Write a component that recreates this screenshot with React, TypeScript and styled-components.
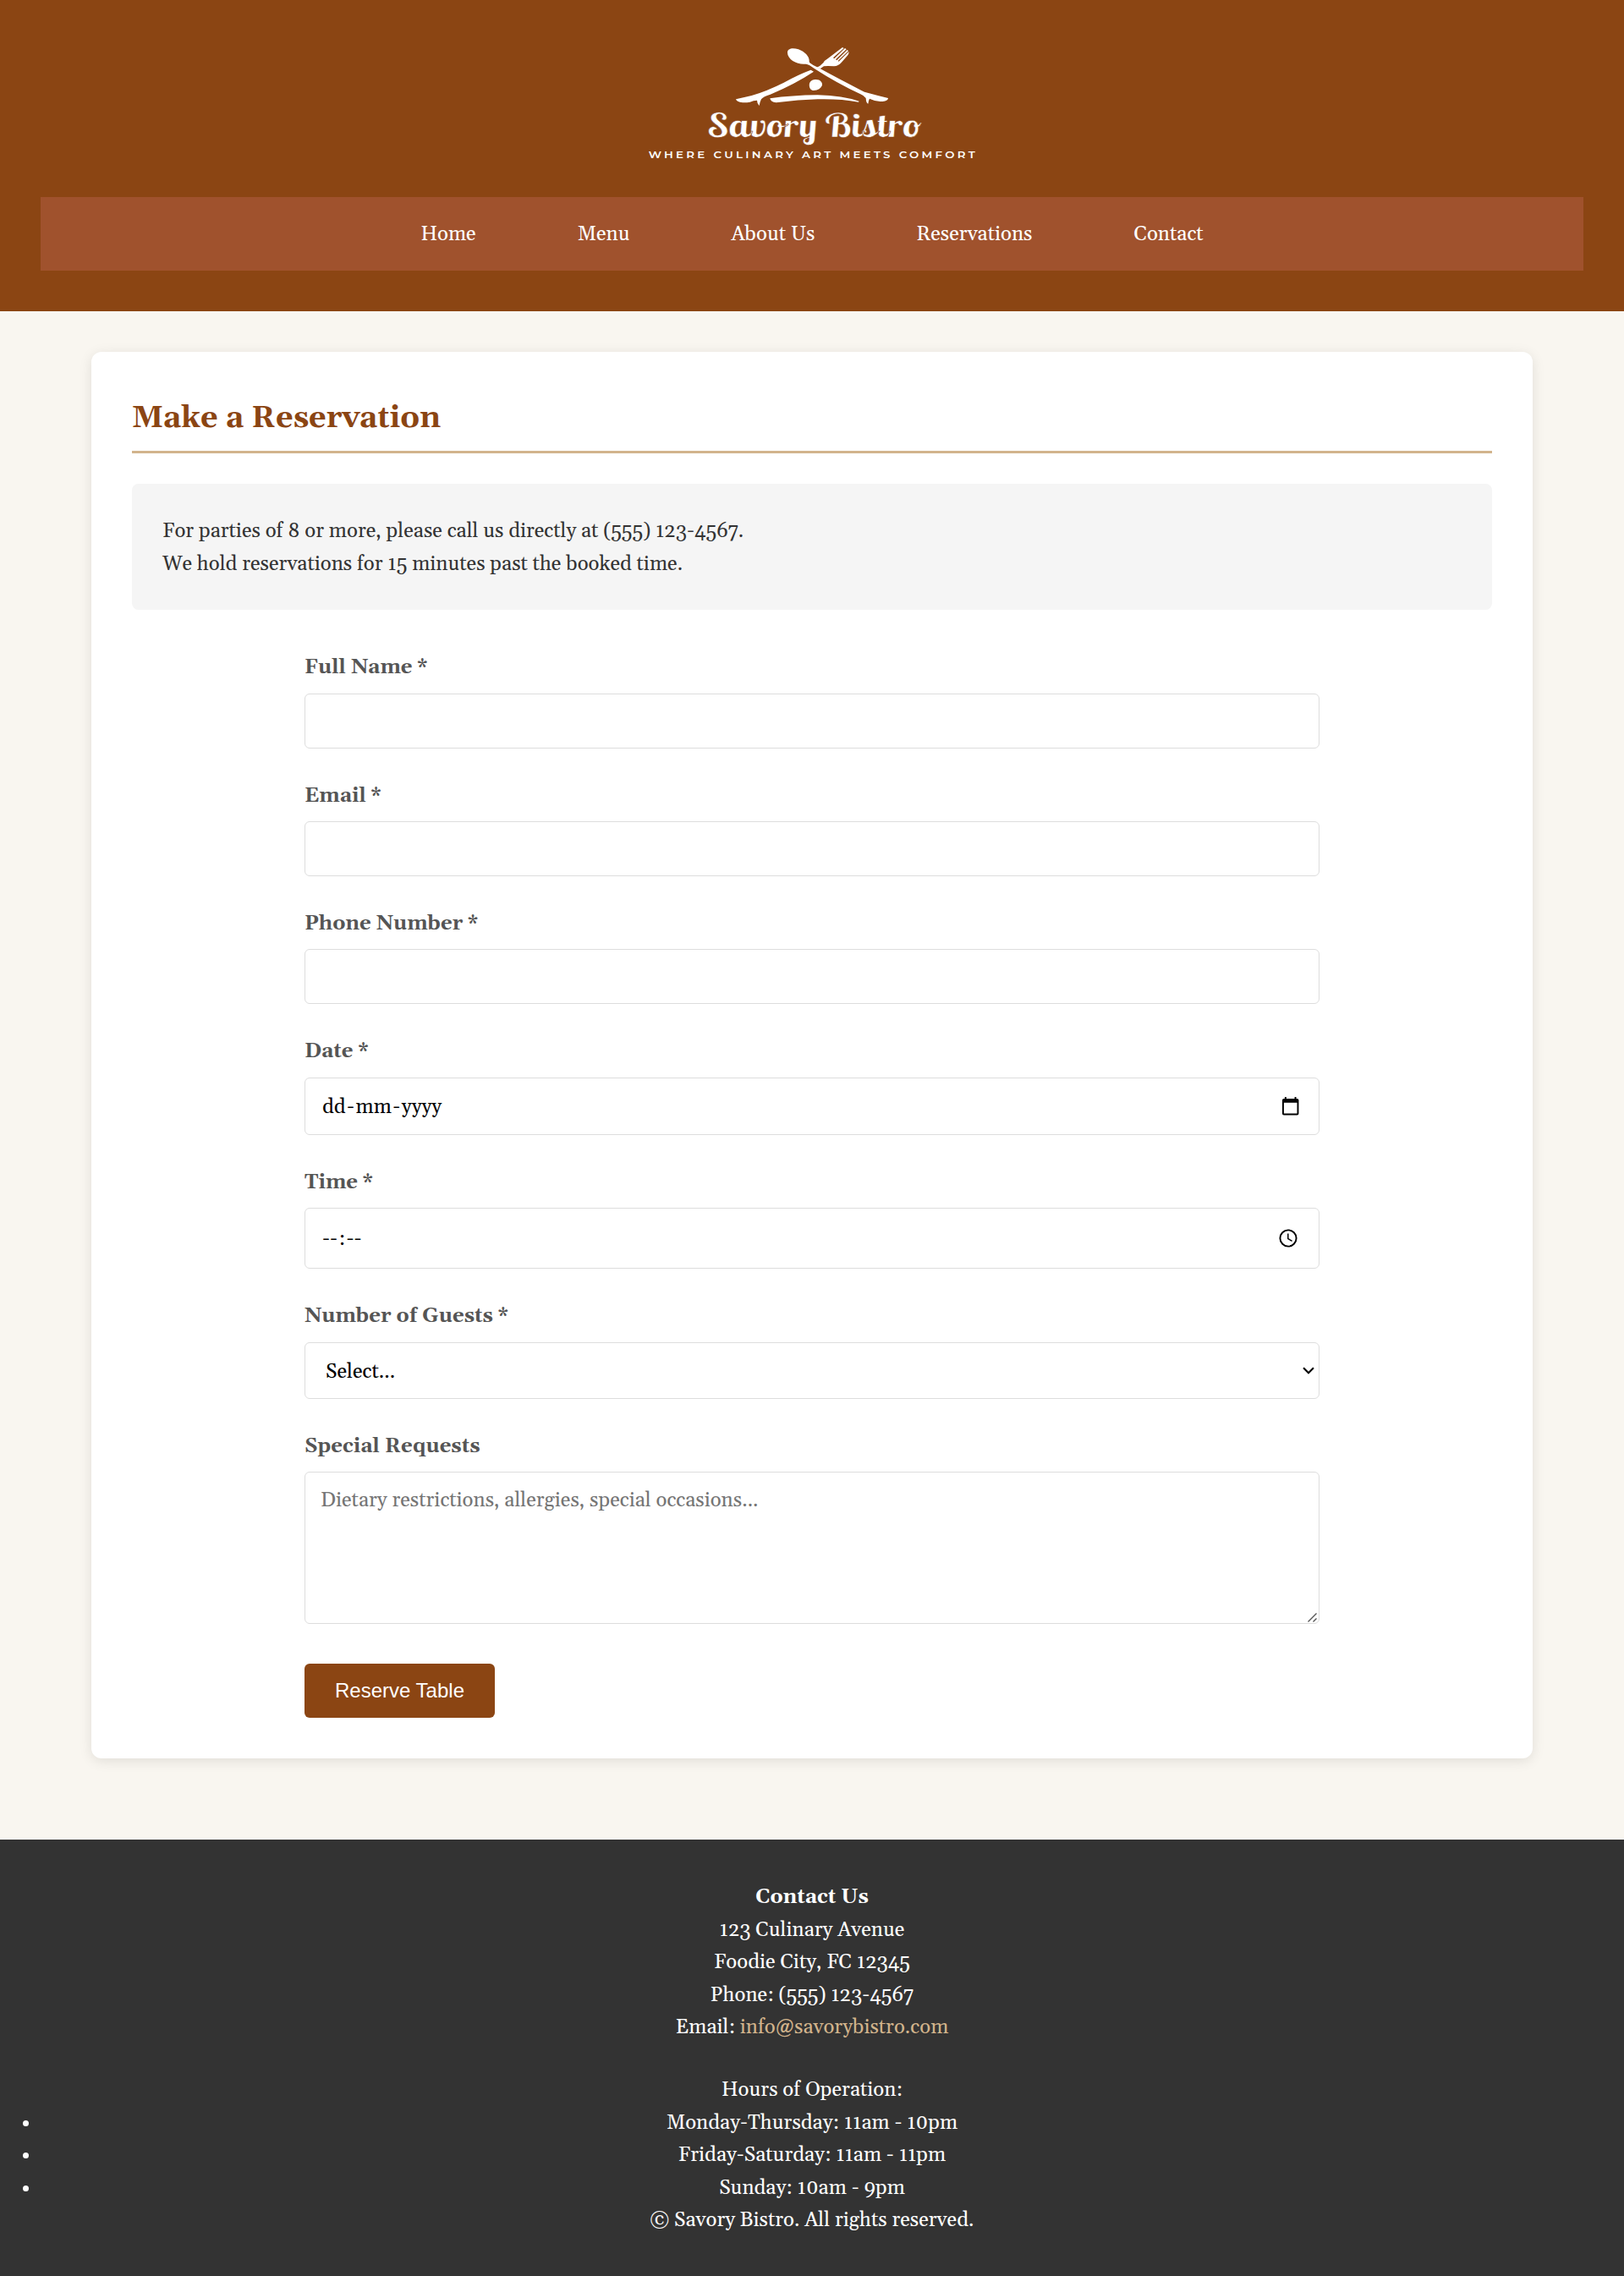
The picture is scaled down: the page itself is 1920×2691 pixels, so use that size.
import React from "react";
import styled, { createGlobalStyle } from "styled-components";

const serif = `Gelasio, Georgia, "Liberation Serif", serif`;

const GlobalStyle = createGlobalStyle`
  * { box-sizing: border-box; }
  body {
    margin: 0;
    background: #f9f6f0;
    color: #333;
    font-family: ${serif};
    font-size: 24px;
    line-height: 38.4px;
  }
`;

const Header = styled.header`
  height: 367.6px;
  padding: 48px 48px 0;
  background: #8b4513;
  display: flex;
  flex-direction: column;
`;

const LogoLink = styled.a`
  height: 185.2px;
  display: flex;
  justify-content: center;
  align-items: flex-start;
`;

const Nav = styled.nav`
  height: 86.4px;
  padding: 25px 24px 23px;
  background: #a0522d;
  display: flex;
  justify-content: center;
  gap: 120px;
`;

const NavLink = styled.a`
  color: #fff;
  text-decoration: none;
`;

const Card = styled.main`
  margin: 48px 108px 96px;
  padding: 48px;
  height: 1663.4px;
  background: #fff;
  border-radius: 12px;
  box-shadow: 0 3px 15px rgba(0, 0, 0, 0.1);
`;

const Title = styled.h1`
  margin: 0 0 36px;
  padding: 2px 0 10px;
  border-bottom: 3px solid #d2b48c;
  color: #8b4513;
  font-size: 36px;
  line-height: 57.6px;
  font-weight: 700;
`;

const Notice = styled.div`
  padding: 37px 36px 35px;
  margin-bottom: 48.3px;
  background: #f5f5f5;
  border-radius: 7.5px;
`;

const Form = styled.form`
  width: 1200px;
  margin: 0 auto;
  display: flex;
  flex-direction: column;
`;

const Group = styled.div`
  margin-bottom: 36px;
  display: flex;
  flex-direction: column;
  gap: 11px;
`;

const Label = styled.label`
  padding-top: 1px;
  color: #555;
  font-weight: 700;
`;

const fieldBox = `
  width: 100%;
  border: 1px solid #ddd;
  border-radius: 6px;
  background: #fff;
  color: #000;
  font-family: ${serif};
  font-size: 24px;
`;

const Input = styled.input`
  ${fieldBox}
  height: 64.9px;
  padding: 18px;
  outline: none;
`;

const Picker = styled.div<{ $height: number; $left: number; $right: number }>`
  ${fieldBox}
  height: ${(p) => p.$height}px;
  padding: 0 ${(p) => p.$right}px 0 ${(p) => p.$left}px;
  display: flex;
  align-items: center;
  justify-content: space-between;
`;

const Parts = styled.span`
  padding-top: 3px;
  display: flex;
  gap: 1.5px;
`;

const AreaWrap = styled.div`
  position: relative;
  height: 180px;
`;

const Area = styled.textarea`
  ${fieldBox}
  display: block;
  height: 180px;
  padding: 19px 18px 17px;
  line-height: 28px;
  resize: none;
  outline: none;
  &::placeholder { color: #757575; opacity: 1; }
`;

const Grip = styled.svg`
  position: absolute;
  right: 2px;
  bottom: 1px;
`;

const Submit = styled.button`
  align-self: flex-start;
  width: 225px;
  height: 64px;
  margin-top: 11px;
  padding: 0;
  border: 0;
  border-radius: 6px;
  background: #8b4513;
  color: #fff;
  font-family: "Liberation Sans", Arial, sans-serif;
  font-size: 24px;
`;

const Footer = styled.footer`
  height: 516px;
  padding: 49.4px 48px 46.6px;
  background: #333;
  color: #fff;
  text-align: center;
`;

const Text = styled.p<{ $gap?: number }>`
  margin: 0 0 ${(p) => p.$gap ?? 0}px;
`;

const MailLink = styled.a`
  color: #d2b48c;
  text-decoration: none;
`;

const Hours = styled.ul`
  margin: 0;
  padding: 0;
`;

const Logo = () => (
  <svg width="440" height="160" viewBox="0 24 1320 480" fill="#fff">
    <path d="M573 66C574 52 590 49 612 55C636 64 652 82 650 98L652 103Q664 113 684 121Q770 168 846 206Q890 218 930 228C930 237 915 241 902 240Q880 238 864 230Q860 237 859 248Q852 246 851 228Q846 220 832 214Q750 176 668 123Q650 108 638 107C610 111 572 92 573 66Z" />
    <path d="M676 120Q688 116 700 103Q704 94 718 86L768 48L773 51L735 85L739 88L777 51L782 55L744 91L748 94L785 57L789 61L752 96L755 98L790 64Q793 68 785 78L764 102Q754 114 738 115Q714 113 702 115L690 123Z" />
    <path d="M656 128L666 134Q600 178 512 215Q488 222 480 232Q475 242 473 255Q465 248 465 236Q452 236 440 242C420 246 394 245 390 232Q420 225 446 219Q500 203 560 173Q610 145 656 128Z" />
    <path d="M674 162C690 162 697 173 696 182Q690 200 665 201C652 200 649 186 651 176C654 166 664 162 674 162Z" />
    <path d="M511 229Q590 218 680 217Q770 220 827 239L825 242Q760 230 680 232Q610 234 540 243Q514 246 511 229Z" />
    <text
      transform="translate(292 365) skewX(10)"
      fontFamily="Lobster, 'Liberation Serif', cursive"
      fontSize="116"
      stroke="#8b4513"
      strokeWidth="1.5"
      textLength="766"
      lengthAdjust="spacingAndGlyphs"
    >
      Savory Bistro
    </text>
    <text x="80" y="441" fontFamily="Montserrat, Inter, sans-serif" fontWeight="600" fontSize="33" letterSpacing="8" textLength="1168" lengthAdjust="spacingAndGlyphs">WHERE CULINARY ART MEETS COMFORT</text>
  </svg>
);

const CalendarIcon = () => (
  <svg width="23.4" height="23.4" viewBox="0 0 24 24">
    <path d="M20 3h-1V1h-2v2H7V1H5v2H4c-1.1 0-2 .9-2 2v16c0 1.1.9 2 2 2h16c1.1 0 2-.9 2-2V5c0-1.1-.9-2-2-2zm0 18H4V8h16v13z" />
  </svg>
);

const ClockIcon = () => (
  <svg width="22" height="22" viewBox="0 0 22 22" fill="none" stroke="#000" strokeWidth="1.9">
    <circle cx="11" cy="11" r="9.6" />
    <path d="M10.8 5.6V11.6L15.6 14.4" strokeWidth="1.5" />
  </svg>
);

const ChevronIcon = () => (
  <svg width="14" height="9" viewBox="0 0 14 9" fill="none" stroke="#000" strokeWidth="2.1">
    <path d="M1 1.2L7 7.2L13 1.2" />
  </svg>
);

const nav = ["Home", "Menu", "About Us", "Reservations", "Contact"];
const plainFields = ["Full Name *", "Email *", "Phone Number *"];
const hours = ["Monday-Thursday: 11am - 10pm", "Friday-Saturday: 11am - 11pm", "Sunday: 10am - 9pm"];

export default function App() {
  return (
    <>
      <GlobalStyle />
      <Header>
        <LogoLink><Logo /></LogoLink>
        <Nav>{nav.map((n) => <NavLink key={n}>{n}</NavLink>)}</Nav>
      </Header>
      <Card>
        <Title>Make a Reservation</Title>
        <Notice>
          <Text>For parties of 8 or more, please call us directly at (555) 123-4567.</Text>
          <Text>We hold reservations for 15 minutes past the booked time.</Text>
        </Notice>
        <Form>
          {plainFields.map((f) => (
            <Group key={f}>
              <Label>{f}</Label>
              <Input />
            </Group>
          ))}
          <Group>
            <Label>Date *</Label>
            <Picker $height={68} $left={20} $right={22}>
              <Parts><span>dd</span><span>-</span><span>mm</span><span>-</span><span>yyyy</span></Parts>
              <CalendarIcon />
            </Picker>
          </Group>
          <Group>
            <Label>Time *</Label>
            <Picker $height={72.3} $left={20} $right={25}>
              <Parts><span>--</span><span>:</span><span>--</span></Parts>
              <ClockIcon />
            </Picker>
          </Group>
          <Group>
            <Label>Number of Guests *</Label>
            <Picker $height={67} $left={24} $right={5}>
              <Parts>Select...</Parts>
              <ChevronIcon />
            </Picker>
          </Group>
          <Group>
            <Label>Special Requests</Label>
            <AreaWrap>
              <Area placeholder="Dietary restrictions, allergies, special occasions..." />
              <Grip width="13" height="13" viewBox="0 0 13 13" stroke="#555" strokeWidth="1.4">
                <path d="M1.5 11.5L11.5 1.5M7.5 11.5L11.5 7.5" />
              </Grip>
            </AreaWrap>
          </Group>
          <Submit type="button">Reserve Table</Submit>
        </Form>
      </Card>
      <Footer>
        <Text><b>Contact Us</b></Text>
        <Text>123 Culinary Avenue</Text>
        <Text>Foodie City, FC 12345</Text>
        <Text>Phone: (555) 123-4567</Text>
        <Text $gap={36}>Email: <MailLink>info@savorybistro.com</MailLink></Text>
        <Text>Hours of Operation:</Text>
        <Hours>{hours.map((h) => <li key={h}>{h}</li>)}</Hours>
        <Text>© Savory Bistro. All rights reserved.</Text>
      </Footer>
    </>
  );
}
